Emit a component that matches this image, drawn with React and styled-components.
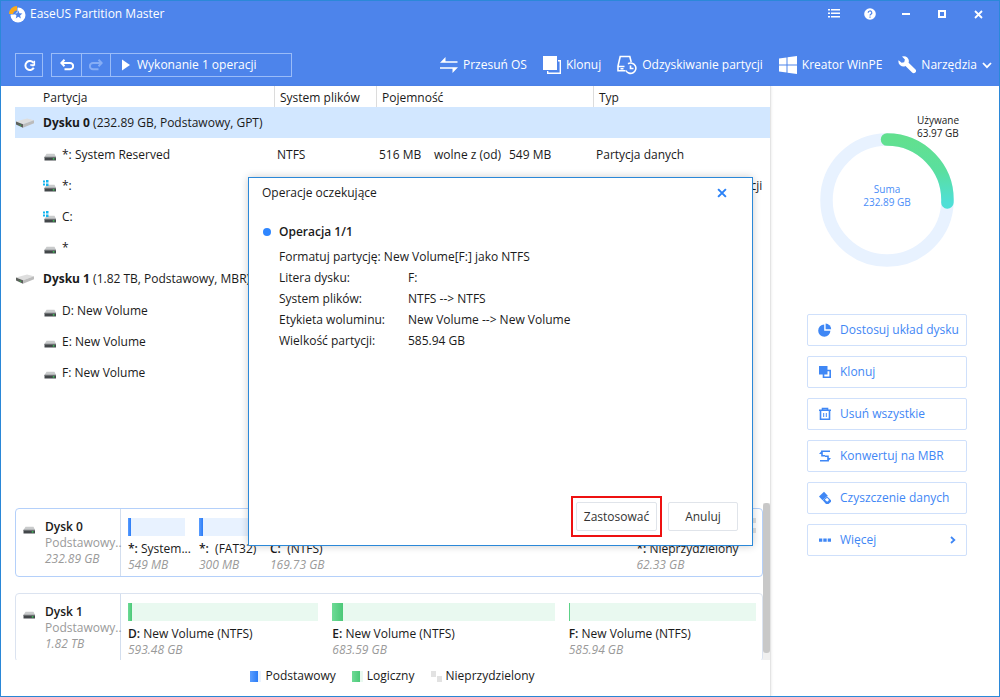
import React from 'react'
import styled, { createGlobalStyle } from 'styled-components'

const GlobalStyle = createGlobalStyle
`
    * {
        box-sizing: border-box;
    }
    body {
        margin: 0;
        font-family: 'Open Sans', 'Noto Sans', sans-serif;
        font-size: 12px;
        line-height: 16px;
        color: #1a1a1a;
        background: #ffffff;
    }
    button {
        font: inherit;
        color: inherit;
        padding: 0;
        background: none;
        border: none;
        cursor: pointer;
    }
    svg {
        display: block;
        flex: none;
    }
`;

const Window = styled.div
`
    position: relative;
    min-height: 100vh;
    display: flex;
    flex-direction: column;
    border: 1px solid #2b88d8;
`;

/* header */
const Header = styled.header
`
    height: 85px;
    display: flex;
    flex-direction: column;
    color: #ffffff;
    background: #4d84eb;
`;
const TitleBar = styled.div
`
    height: 26px;
    padding: 0 3px 0 8px;
    display: flex;
    align-items: center;
    justify-content: space-between;
`;
const AppName = styled.h1
`
    margin: 0;
    display: flex;
    align-items: center;
    gap: 4px;
    font-size: 12px;
    font-weight: 400;
`;
const WindowButtons = styled.div
`
    display: flex;
`;
const WindowButton = styled.button
`
    width: 36px;
    height: 26px;
    display: flex;
    align-items: center;
    justify-content: center;
`;
const Toolbar = styled.div
`
    padding: 26px 7px 0 14px;
    display: flex;
    align-items: center;
    justify-content: space-between;
`;
const ToolGroups = styled.div
`
    display: flex;
    gap: 8px;
`;
const ToolGroup = styled.div
`
    height: 24px;
    display: flex;
    border: 1px solid #9abcf8;
`;
const ToolButton = styled.button
`
    width: ${(props) => (props.$wide ? '181px' : '26px')};
    padding-left: ${(props) => (props.$wide ? '10px' : '0')};
    display: flex;
    align-items: center;
    justify-content: ${(props) => (props.$wide ? 'flex-start' : 'center')};
    gap: 6px;

    & + & {
        border-left: 1px solid #9abcf8;
    }
    ${ToolGroup} + ${ToolGroup} &:not(:last-child) {
        width: 29px;
    }
    &:disabled {
        color: #86adf5;
    }
`;
const Menu = styled.nav
`
    display: flex;
    gap: 16px;
`;
const MenuButton = styled.button
`
    display: flex;
    align-items: center;
    gap: 5px;
    height: 24px;
`;

/* content */
const Body = styled.main
`
    flex: 1;
    display: flex;
`;
const Content = styled.section
`
    flex: 1;
    min-width: 0;
    padding-left: 14px;
    display: flex;
    flex-direction: column;
    border-right: 1px solid #e4e4e4;
    box-shadow: 1px 0 2px rgba(0, 0, 0, 0.06);
`;
const TableArea = styled.div
`
    flex: 1;
`;
const Table = styled.table
`
    width: 100%;
    table-layout: fixed;
    border-collapse: separate;
    border-spacing: 0;
`;
const HeadCell = styled.th
`
    width: ${(props) => props.$width || 'auto'};
    height: 21px;
    padding: 2px 0 0 ${(props) => (props.$first ? '27px' : '5px')};
    font-weight: 400;
    text-align: left;
    border-left: 1px solid ${(props) => (props.$first ? 'transparent' : '#dcdcdc')};
`;
const DiskCell = styled.td
`
    height: 32px;
    padding: 0;
    background: ${(props) => (props.$selected ? '#d2e7ff' : 'transparent')};
    background-clip: padding-box;
    border-bottom: 1px solid transparent;
`;
const DiskTitle = styled.div
`
    display: flex;
    align-items: center;
    gap: 8px;
`;
const Cell = styled.td
`
    height: 31px;
    padding: 1px 0 0 3px;
    white-space: nowrap;
`;
const NameCell = styled(Cell)
`
    padding-left: 27px;
`;
const VolumeName = styled.div
`
    display: flex;
    align-items: center;
    gap: 5px;
`;
const Capacity = styled.div
`
    display: grid;
    grid-template-columns: 38px 92px 60px;

    span:first-child {
        text-align: right;
    }
    span:nth-child(2) {
        padding-left: 17px;
    }
`;

/* disk map */
const DiskMap = styled.div
`
    height: 157px;
    display: flex;
    overflow: hidden;
`;
const Disks = styled.div
`
    flex: 1;
    padding-top: 5px;
    display: flex;
    flex-direction: column;
    gap: 16px;
`;
const DiskCard = styled.div
`
    flex: none;
    height: 69px;
    display: flex;
    border: 1px solid ${(props) => (props.$selected ? '#b4d0fa' : '#dbe3f0')};
    border-radius: 4px;
`;
const DiskInfo = styled.div
`
    width: 105px;
    padding: 10px 0 0 5px;
    display: flex;
    gap: 9px;
    border-right: 1px solid #d3deee;

    svg {
        margin-top: 3px;
    }
`;
const DiskName = styled.div
`
    font-weight: 600;
`;
const Muted = styled.div
`
    color: #9a9a9a;
    white-space: nowrap;
    font-style: ${(props) => (props.$italic ? 'italic' : 'normal')};
`;
const Partitions = styled.div
`
    flex: 1;
    padding: 9px 6px 0 7px;
    display: grid;
    grid-template-columns: ${(props) => props.$columns};
    gap: 14px;
`;
const Partition = styled.div
`
    min-width: 0;
    white-space: nowrap;
`;
const Bar = styled.div
`
    height: 18px;
    margin-bottom: 5px;
    background: ${(props) => fills[props.$kind].light};
`;
const BarUsed = styled.div
`
    height: 18px;
    background: ${(props) => fills[props.$kind].dark};
`;
const Label = styled.div
`
    white-space: pre;

    b {
        font-weight: 600;
    }
`;
const Scrollbar = styled.div
`
    width: 7px;
    background: #f0f0f0;
`;
const Thumb = styled.div
`
    height: 150px;
    background: #c8c8c8;
    border-radius: 3px;
`;
const Legend = styled.div
`
    height: 36px;
    padding-bottom: 4px;
    display: flex;
    align-items: center;
    justify-content: center;
    gap: 16px;
`;
const LegendItem = styled.div
`
    display: flex;
    align-items: center;
    gap: 4px;
`;
const Swatch = styled.span
`
    width: 11px;
    height: 11px;
    background: ${(props) => fills[props.$kind].swatch};
`;

/* side panel */
const Side = styled.aside
`
    width: 228px;
    padding: 47px 32px 0 36px;
    display: flex;
    flex-direction: column;
    gap: 47px;
`;
const Ring = styled.div
`
    position: relative;
    width: 134px;
    height: 134px;
    align-self: center;
`;
const RingText = styled.div
`
    position: absolute;
    inset: 0;
    display: flex;
    flex-direction: column;
    align-items: center;
    justify-content: center;
    padding-bottom: 8px;
    font-size: 10px;
    line-height: 13px;
    color: #4a8df8;
`;
const UsedText = styled.div
`
    position: absolute;
    top: -19px;
    left: 97px;
    font-size: 10px;
    line-height: 13px;
    white-space: nowrap;
`;
const Actions = styled.div
`
    display: flex;
    flex-direction: column;
    gap: 10px;
`;
const ActionButton = styled.button
`
    height: 32px;
    padding: 0 10px;
    display: flex;
    align-items: center;
    gap: 8px;
    color: #3f87f5;
    border: 1px solid #cfe0fb;
    border-radius: 2px;

    span {
        flex: 1;
        text-align: left;
        white-space: nowrap;
    }
`;

/* dialog */
const Dialog = styled.div
`
    position: absolute;
    top: 176px;
    left: calc(50% - 252px);
    width: 505px;
    height: 369px;
    padding: 0 14px 8px 13px;
    display: flex;
    flex-direction: column;
    background: #ffffff;
    border: 1px solid #2b88d8;
    box-shadow: 0 0 8px rgba(0, 0, 0, 0.2);
`;
const DialogHeader = styled.div
`
    height: 30px;
    padding-right: 11px;
    display: flex;
    align-items: center;
    justify-content: space-between;
`;
const DialogTitle = styled.h2
`
    margin: 0;
    font-size: 12px;
    font-weight: 400;
`;
const CloseButton = styled.button
`
    color: #2b82f7;
`;
const OperationTitle = styled.h3
`
    margin: 16px 0 6px;
    display: flex;
    align-items: center;
    gap: 8px;
    font-size: 12px;
    font-weight: 600;

    &::before {
        content: '';
        width: 8px;
        height: 8px;
        margin-left: 1px;
        background: #2f86ff;
        border-radius: 50%;
    }
`;
const Operation = styled.div
`
    padding-left: 17px;
    line-height: 21px;
`;
const Details = styled.dl
`
    margin: 0;
    display: grid;
    grid-template-columns: 129px 1fr;

    dd {
        margin: 0;
    }
`;
const DialogFooter = styled.div
`
    margin-top: auto;
    display: flex;
    align-items: center;
    justify-content: flex-end;
    gap: 6px;
`;
const Highlight = styled.div
`
    padding: 4px 3px;
    border: 2px solid #ee1111;
`;
const DialogButton = styled.button
`
    width: ${(props) => (props.$primary ? '81px' : '70px')};
    height: 29px;
    display: block;
    color: #333333;
    border: 1px solid #e0e4ea;
    border-radius: 2px;
`;

const fills = {
    primary: {
        light: '#e8f2ff',
        dark: 'linear-gradient(90deg, #5a9dff, #2b7cf6)',
        swatch: 'linear-gradient(90deg, #5a9dff, #2b7cf6 8px, #e8f2ff 8px)',
    },
    logical: {
        light: '#e9f9f0',
        dark: 'linear-gradient(90deg, #6edb96, #4cc878)',
        swatch: 'linear-gradient(90deg, #6edb96, #4cc878 8px, #e9f9f0 8px)',
    },
    free: {
        light: 'conic-gradient(#e0e0e0 25%, #ffffff 0 50%, #e0e0e0 0 75%, #ffffff 0) 0 0 / 10px 10px',
        dark: 'none',
        swatch: 'conic-gradient(#ffffff 25%, #e2e2e2 0 50%, #ffffff 0 75%, #e2e2e2 0) 0 0 / 11px 11px',
    },
};

const table = [
    {
        name: 'Dysku 0',
        info: '(232.89 GB, Podstawowy, GPT)',
        selected: true,
        volumes: [
            { name: '*: System Reserved', fs: 'NTFS', free: '516 MB', total: '549 MB', type: 'Partycja danych' },
            { name: '*:', windows: true, type: 'Partycja systemowa, z partycji' },
            { name: 'C:', windows: true },
            { name: '*' },
        ],
    },
    {
        name: 'Dysku 1',
        info: '(1.82 TB, Podstawowy, MBR)',
        volumes: [{ name: 'D: New Volume' }, { name: 'E: New Volume' }, { name: 'F: New Volume' }],
    },
];

const map = [
    {
        name: 'Dysk 0',
        size: '232.89 GB',
        selected: true,
        columns: '57px 57px 351fr 119fr',
        partitions: [
            { letter: '*:', label: ' System...', size: '549 MB', kind: 'primary', used: 6 },
            { letter: '*:', label: '  (FAT32)', size: '300 MB', kind: 'primary', used: 7 },
            { letter: 'C:', label: '  (NTFS)', size: '169.73 GB', kind: 'primary', used: 38 },
            { letter: '*:', label: ' Nieprzydzielony', size: '62.33 GB', kind: 'free', used: 0 },
        ],
    },
    {
        name: 'Dysk 1',
        size: '1.82 TB',
        columns: '190fr 222fr 187fr',
        partitions: [
            { letter: 'D:', label: ' New Volume (NTFS)', size: '593.48 GB', kind: 'logical', used: 2 },
            { letter: 'E:', label: ' New Volume (NTFS)', size: '683.59 GB', kind: 'logical', used: 5 },
            { letter: 'F:', label: ' New Volume (NTFS)', size: '585.94 GB', kind: 'logical', used: 0.5 },
        ],
    },
];

const Logo = () => (
    <svg width="17" height="17" viewBox="0 0 17 17">
        <circle cx="9" cy="9" r="7.500" fill="#fff" />
        <path d="M0 0h8.500v5.500L5.500 8.500H0z" fill="#4d84eb" />
        <path d="M8 0v4.500A4.500 4.500 0 0 0 4 8H0A8 8 0 0 1 8 0z" fill="#fba919" />
        <path d="M9.300 4.500l1.100 2.800 3 .2-2.300 1.900.8 3-2.600-1.600-2.600 1.600.8-3-2.300-1.900 3-.2z" fill="#4d84eb" />
    </svg>
);
const ListIcon = () => (
    <svg width="12" height="10" viewBox="0 0 12 10" fill="currentColor">
        <path d="M0 0h2v1.500H0zM3 0h9v1.500H3zM0 3.500h2V5H0zM3 3.500h9V5H3zM0 7h2v1.500H0zM3 7h9v1.500H3z" />
    </svg>
);
const HelpIcon = () => (
    <svg width="12" height="12" viewBox="0 0 12 12">
        <circle cx="6" cy="6" r="5.800" fill="#fff" />
        <path d="M4.200 4.800a1.800 1.800 0 1 1 2.700 1.500c-.6.400-.9.600-.9 1.200M6 8.600v1.200" fill="none" stroke="#4d84eb" strokeWidth="1.200" />
    </svg>
);
const MinimizeIcon = () => (
    <svg width="8" height="2" viewBox="0 0 8 2"><path d="M0 0h8v2H0z" fill="#fff" /></svg>
);
const MaximizeIcon = () => (
    <svg width="8" height="8" viewBox="0 0 8 8"><path d="M1 1h6v6H1z" fill="none" stroke="#fff" strokeWidth="2" /></svg>
);
const CloseIcon = ({ size = 9 }) => (
    <svg width={size} height={size} viewBox="0 0 9 9"><path d="M1 1l7 7M8 1L1 8" fill="none" stroke="currentColor" strokeWidth="1.800" /></svg>
);
const RefreshIcon = () => (
    <svg width="13" height="13" viewBox="0 0 13 13" fill="none" stroke="currentColor" strokeWidth="2">
        <path d="M10.800 8.800A4.500 4.500 0 1 1 10.600 4" />
        <path d="M11.300 1.800v4.200H7.200M8.500 6.500h2.500" strokeWidth="1.600" />
    </svg>
);
const UndoIcon = ({ flip }) => (
    <svg width="14" height="12" viewBox="0 0 14 12" fill="none" stroke="currentColor" strokeWidth="2">
        <g transform={flip ? 'matrix(-1 0 0 1 14 0)' : undefined}>
            <path d="M1.500 4H10a2.900 2.900 0 0 1 0 6.300H4.500" />
            <path d="M4.500.8L1.300 4l3.200 3.200" />
        </g>
    </svg>
);
const PlayIcon = () => (
    <svg width="10" height="12" viewBox="0 0 10 12"><path d="M1 0.500L9 6l-8 5.500z" fill="#fff" /></svg>
);
const MoveIcon = () => (
    <svg width="18" height="16" viewBox="0 0 18 16" fill="#fff">
        <path d="M0 5.800L5.500 0v4.300h12v1.500zM18 10.300L12.500 16v-4.200H0v-1.500z" />
    </svg>
);
const CloneIcon = () => (
    <svg width="18" height="18" viewBox="0 0 18 18">
        <path d="M0 0h14v14H0z" fill="currentColor" />
        <path d="M15 4.700h2.300v12.600H4.700V15" fill="none" stroke="currentColor" strokeWidth="1.400" />
    </svg>
);
const SmallCloneIcon = () => (
    <svg width="14" height="14" viewBox="0 0 14 14">
        <path d="M5.500 5.500h6.700v6.700H5.500z" fill="#fff" stroke="currentColor" strokeWidth="1.600" />
        <path d="M1 1h8.500v8.500H1z" fill="currentColor" />
    </svg>
);
const RecoverIcon = () => (
    <svg width="20" height="20" viewBox="0 0 20 20" fill="none" stroke="#fff" strokeWidth="1.600">
        <path d="M8.500 15.800H1V11L3.200 1.500h9.600l1.400 5.500M1 11.500h6.500M3.500 13.800h3" />
        <path d="M11 8.700a5.200 5.200 0 1 1-2 6.800" />
        <path d="M13.500 10.500v3h3" />
    </svg>
);
const WindowsIcon = () => (
    <svg width="18" height="18" viewBox="0 0 18 18" fill="#fff">
        <path d="M0 2.500l7.500-1.100v7H0zM8.500 1.200L18 0v8.400H8.500zM0 9.600h7.500v7L0 15.500zM8.500 9.600H18V18l-9.500-1.300z" />
    </svg>
);
const WrenchIcon = () => (
    <svg width="18" height="18" viewBox="0 0 18 18">
        <path d="M4 .6a5 5 0 0 1 6.600 6.200l6.700 6.500a2.200 2.200 0 0 1-3.200 3.200L7.500 10A5 5 0 0 1 .6 4.200l3 2.600 2.600-.6.700-2.600z" fill="#fff" />
    </svg>
);
const Chevron = ({ right }) => (
    <svg width={right ? 6 : 10} height={right ? 8 : 7} viewBox={right ? '0 0 6 8' : '0 0 10 7'} fill="none" stroke="currentColor" strokeWidth="1.800">
        <path d={right ? 'M1 1l3.300 3L1 7' : 'M1 1l4 4.200L9 1'} />
    </svg>
);
const DiskIcon = () => (
    <svg width="20" height="12" viewBox="0 0 20 12">
        <path d="M1 4.500L12 1.500l7 1.800L8 7.300z" fill="#dedede" />
        <path d="M1 4.500l7 2.800v3.400L1 7.500z" fill="#5c605c" />
        <path d="M8 7.300L19 3.300v3L8 10.700z" fill="#bcbcbc" />
        <path d="M4.500 8l1.500.6" stroke="#39b54a" strokeWidth="1" />
    </svg>
);
const DriveIcon = ({ windows }) => (
    <svg width="15" height="13" viewBox="0 0 15 13">
        <path d="M4.500 4.800h8L14 8H2.500z" fill="#c9cbcc" />
        <path d="M2.500 8H14v3.500H2.500z" fill="#43474a" />
        <path d="M2.500 7.700H14v1H2.500z" fill="#7d8183" />
        <path d="M10.800 9.300h1.600v1.200h-1.600z" fill="#3be05a" />
        {windows && <path d="M1 0.500h2v2H1zM4 0h2.500v2.500H4zM1 3.500h2v2H1zM4 3.500h2.500V6H4z" fill="#14b4ee" />}
    </svg>
);
const PieIcon = () => (
    <svg width="14" height="14" viewBox="0 0 14 14" fill="currentColor">
        <path d="M6.200 1.500v6.200h6.200A6.100 6.100 0 1 1 6.200 1.500z" />
        <path d="M7.600.6a5.800 5.800 0 0 1 5.600 5.600H7.600z" />
    </svg>
);
const TrashIcon = () => (
    <svg width="14" height="14" viewBox="0 0 14 14" fill="none" stroke="currentColor" strokeWidth="1.600">
        <path d="M1 3.300h12M4.500 3V1.500h5V3M2.500 3.500v8.800h9V3.500" />
        <path d="M5.700 6v4M8.300 6v4" strokeWidth="1" />
    </svg>
);
const ConvertIcon = () => (
    <svg width="14" height="14" viewBox="0 0 14 14">
        <path d="M12 2.300H4v4.500h3M2 11.700h8V7.200H7" fill="none" stroke="currentColor" strokeWidth="1.600" />
        <path d="M4 1.500L1 5h3zM10 12.500L13 9h-3z" fill="currentColor" />
    </svg>
);
const EraserIcon = () => (
    <svg width="14" height="14" viewBox="0 0 14 14">
        <path d="M6 .8L1 5.500l3.500 3.800 5.300-4.500z" fill="currentColor" />
        <path d="M4.700 9.300l4.500-3.800L13 9.300v1.500L10.500 13H8z" fill="currentColor" />
        <path d="M6.800 8.700l2.300-2 2 2.400-1.900 1.600z" fill="#fff" />
    </svg>
);
const MoreIcon = () => (
    <svg width="14" height="14" viewBox="0 0 14 14" fill="currentColor">
        <path d="M1 5.500h3.300v3.200H1zM5.300 5.500h3.400v3.200H5.300zM9.700 5.500H13v3.200H9.700z" />
    </svg>
);

const UsageRing = () => (
    <Ring>
        <svg width="134" height="134" viewBox="0 0 134 134" fill="none" strokeWidth="12.500">
            <defs>
                <linearGradient id="used" x1="0" y1="0" x2="0" y2="1">
                    <stop offset="0" stopColor="#62e08f" />
                    <stop offset="0.500" stopColor="#5adf9f" />
                    <stop offset="1" stopColor="#4fdfd6" />
                </linearGradient>
            </defs>
            <circle cx="67" cy="67" r="60.500" stroke="#e8f2ff" />
            <path d="M67 6.500A60.500 60.500 0 0 1 127.400 69.500" stroke="url(#used)" strokeLinecap="round" />
        </svg>
        <RingText>
            <span>Suma</span>
            <span>232.89 GB</span>
        </RingText>
        <UsedText>
            Używane<br />63.97 GB
        </UsedText>
    </Ring>
);

const PartitionTable = () => (
    <Table>
        <thead>
            <tr>
                <HeadCell $first $width="259px">Partycja</HeadCell>
                <HeadCell $width="102px">System plików</HeadCell>
                <HeadCell $width="217px">Pojemność</HeadCell>
                <HeadCell>Typ</HeadCell>
            </tr>
        </thead>
        {table.map((disk) => (
            <tbody key={disk.name}>
                <tr>
                    <DiskCell colSpan="4" $selected={disk.selected}>
                        <DiskTitle>
                            <DiskIcon />
                            <span><b>{disk.name}</b> {disk.info}</span>
                        </DiskTitle>
                    </DiskCell>
                </tr>
                {disk.volumes.map((volume) => (
                    <tr key={volume.name}>
                        <NameCell>
                            <VolumeName>
                                <DriveIcon windows={volume.windows} />
                                {volume.name}
                            </VolumeName>
                        </NameCell>
                        <Cell>{volume.fs}</Cell>
                        <Cell>
                            {volume.total && (
                                <Capacity>
                                    <span>{volume.free}</span>
                                    <span>wolne z (od)</span>
                                    <span>{volume.total}</span>
                                </Capacity>
                            )}
                        </Cell>
                        <Cell>{volume.type}</Cell>
                    </tr>
                ))}
            </tbody>
        ))}
    </Table>
);

const App = () => (
    <>
        <GlobalStyle />
        <Window>
            <Header>
                <TitleBar>
                    <AppName><Logo />EaseUS Partition Master</AppName>
                    <WindowButtons>
                        <WindowButton aria-label="Menu"><ListIcon /></WindowButton>
                        <WindowButton aria-label="Pomoc"><HelpIcon /></WindowButton>
                        <WindowButton aria-label="Minimalizuj"><MinimizeIcon /></WindowButton>
                        <WindowButton aria-label="Maksymalizuj"><MaximizeIcon /></WindowButton>
                        <WindowButton aria-label="Zamknij"><CloseIcon /></WindowButton>
                    </WindowButtons>
                </TitleBar>
                <Toolbar>
                    <ToolGroups>
                        <ToolGroup>
                            <ToolButton aria-label="Odśwież"><RefreshIcon /></ToolButton>
                        </ToolGroup>
                        <ToolGroup>
                            <ToolButton aria-label="Cofnij"><UndoIcon /></ToolButton>
                            <ToolButton aria-label="Ponów" disabled><UndoIcon flip /></ToolButton>
                            <ToolButton $wide><PlayIcon />Wykonanie 1 operacji</ToolButton>
                        </ToolGroup>
                    </ToolGroups>
                    <Menu>
                        <MenuButton><MoveIcon />Przesuń OS</MenuButton>
                        <MenuButton><CloneIcon />Klonuj</MenuButton>
                        <MenuButton><RecoverIcon />Odzyskiwanie partycji</MenuButton>
                        <MenuButton><WindowsIcon />Kreator WinPE</MenuButton>
                        <MenuButton><WrenchIcon />Narzędzia<Chevron /></MenuButton>
                    </Menu>
                </Toolbar>
            </Header>
            <Body>
                <Content>
                    <TableArea>
                        <PartitionTable />
                    </TableArea>
                    <DiskMap>
                        <Disks>
                            {map.map((disk) => (
                                <DiskCard key={disk.name} $selected={disk.selected}>
                                    <DiskInfo>
                                        <DriveIcon />
                                        <div>
                                            <DiskName>{disk.name}</DiskName>
                                            <Muted>Podstawowy..</Muted>
                                            <Muted $italic>{disk.size}</Muted>
                                        </div>
                                    </DiskInfo>
                                    <Partitions $columns={disk.columns}>
                                        {disk.partitions.map((part) => (
                                            <Partition key={part.size}>
                                                <Bar $kind={part.kind}>
                                                    <BarUsed $kind={part.kind} style={{ width: `${part.used}%` }} />
                                                </Bar>
                                                <Label><b>{part.letter}</b>{part.label}</Label>
                                                <Muted $italic>{part.size}</Muted>
                                            </Partition>
                                        ))}
                                    </Partitions>
                                </DiskCard>
                            ))}
                        </Disks>
                        <Scrollbar><Thumb /></Scrollbar>
                    </DiskMap>
                    <Legend>
                        <LegendItem><Swatch $kind="primary" />Podstawowy</LegendItem>
                        <LegendItem><Swatch $kind="logical" />Logiczny</LegendItem>
                        <LegendItem><Swatch $kind="free" />Nieprzydzielony</LegendItem>
                    </Legend>
                </Content>
                <Side>
                    <UsageRing />
                    <Actions>
                        <ActionButton><PieIcon /><span>Dostosuj układ dysku</span></ActionButton>
                        <ActionButton><SmallCloneIcon /><span>Klonuj</span></ActionButton>
                        <ActionButton><TrashIcon /><span>Usuń wszystkie</span></ActionButton>
                        <ActionButton><ConvertIcon /><span>Konwertuj na MBR</span></ActionButton>
                        <ActionButton><EraserIcon /><span>Czyszczenie danych</span></ActionButton>
                        <ActionButton><MoreIcon /><span>Więcej</span><Chevron right /></ActionButton>
                    </Actions>
                </Side>
            </Body>
            <Dialog role="dialog" aria-labelledby="dialog-title">
                <DialogHeader>
                    <DialogTitle id="dialog-title">Operacje oczekujące</DialogTitle>
                    <CloseButton aria-label="Zamknij"><CloseIcon size={10} /></CloseButton>
                </DialogHeader>
                <OperationTitle>Operacja 1/1</OperationTitle>
                <Operation>
                    Formatuj partycję: New Volume[F:] jako NTFS
                    <Details>
                        <dt>Litera dysku:</dt>
                        <dd>F:</dd>
                        <dt>System plików:</dt>
                        <dd>NTFS --&gt; NTFS</dd>
                        <dt>Etykieta woluminu:</dt>
                        <dd>New Volume --&gt; New Volume</dd>
                        <dt>Wielkość partycji:</dt>
                        <dd>585.94 GB</dd>
                    </Details>
                </Operation>
                <DialogFooter>
                    <Highlight>
                        <DialogButton $primary>Zastosować</DialogButton>
                    </Highlight>
                    <DialogButton>Anuluj</DialogButton>
                </DialogFooter>
            </Dialog>
        </Window>
    </>
)

export default App
